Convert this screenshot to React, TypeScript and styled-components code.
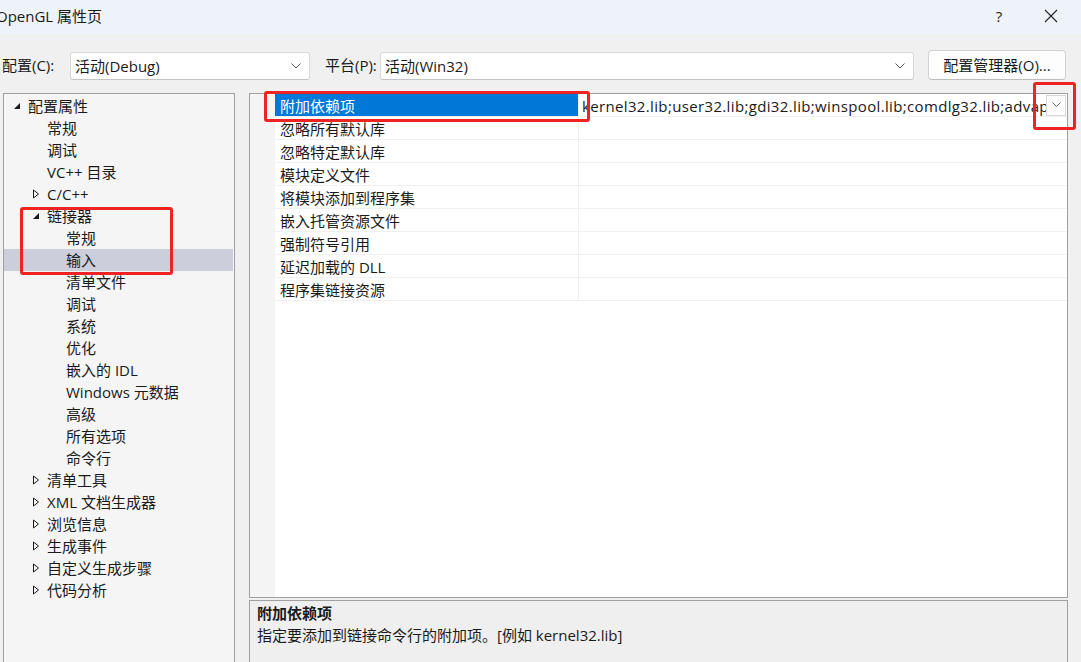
import React from "react";
import styled, { createGlobalStyle } from "styled-components";

const GlobalStyle = createGlobalStyle`
  html, body { margin: 0; padding: 0; background: #f0f0f0; }
  body { font-family: "Open Sans", "Noto Sans CJK SC", sans-serif; color: #1a1a1a; }
  * { box-sizing: border-box; }
`;

const Window = styled.div`
  position: relative;
  width: 1081px;
  height: 662px;
  overflow: hidden;
  display: flex;
  flex-direction: column;
  background: #f0f0f0;
  font-size: 15px;
`;

const TitleBar = styled.div`
  height: 34px;
  flex: none;
  display: flex;
  align-items: center;
  background: #eef2f9;
`;

const Title = styled.div`
  margin-left: -4px;
  margin-top: -4px;
  font-size: 15px;
  color: #1a1a1a;
  flex: 1;
`;

const TitleButton = styled.div<{ $w: number }>`
  width: ${(p) => p.$w}px;
  height: 30px;
  margin-top: -3px;
  display: flex;
  align-items: center;
  justify-content: center;
  font-size: 15px;
  color: #222;
`;

const Toolbar = styled.div`
  height: 59px;
  flex: none;
  display: flex;
  align-items: center;
  padding: 3px 15px 0 2px;
`;

const Label = styled.span<{ $w: number; $ml?: number }>`
  margin-left: ${(p) => p.$ml ?? 0}px;
  width: ${(p) => p.$w}px;
  line-height: 20px;
  white-space: nowrap;
`;

const Combo = styled.div<{ $w: number }>`
  width: ${(p) => p.$w}px;
  height: 28px;
  background: #fff;
  border: 1px solid #d8d8d8;
  border-bottom-color: #c4c4c4;
  border-radius: 3px;
  display: flex;
  align-items: center;
  padding: 0 8px 0 4px;
  margin-top: 1px;
`;

const ComboText = styled.span`
  flex: 1;
  line-height: 20px;
`;

const ManagerButton = styled.div`
  margin-left: auto;
  width: 138px;
  height: 30px;
  background: #fdfdfd;
  border: 1px solid #d3d3d3;
  border-bottom-color: #bdbdbd;
  border-radius: 4px;
  display: flex;
  align-items: center;
  justify-content: center;
  line-height: 20px;
  white-space: nowrap;
`;

const Main = styled.div`
  flex: 1;
  display: flex;
  padding-left: 3px;
  min-height: 0;
`;

const TreePanel = styled.div`
  width: 232px;
  flex: none;
  border: 1px solid #a0a0a0;
  border-bottom: none;
  background: #f5f5f5;
  padding-top: 1px;
`;

const TreeRow = styled.div<{ $level: number; $selected?: boolean }>`
  height: 22px;
  display: flex;
  align-items: center;
  padding-left: ${(p) => 9 + p.$level * 19}px;
  background: ${(p) => (p.$selected ? "#cccedb" : "transparent")};
  margin-right: 1px;
  line-height: 20px;
  white-space: nowrap;
`;

const Expander = styled.span`
  width: 15px;
  height: 20px;
  display: flex;
  align-items: center;
  flex: none;
`;

const RightColumn = styled.div`
  flex: none;
  width: 819px;
  margin-left: 14px;
  display: flex;
  flex-direction: column;
  gap: 2px;
`;

const GridPanel = styled.div`
  height: 505px;
  flex: none;
  border: 1px solid #a0a0a0;
  background: #fff;
  display: flex;
  overflow: hidden;
`;

const Gutter = styled.div`
  width: 25px;
  flex: none;
  background: #f4f4f4;
`;

const Grid = styled.div`
  flex: 1;
  min-width: 0;
  display: flex;
  flex-direction: column;
`;

const GridRow = styled.div`
  height: 23px;
  display: flex;
  border-bottom: 1px solid #f0f0f0;
`;

const NameCell = styled.div<{ $selected?: boolean }>`
  width: 304px;
  flex: none;
  padding: 1px 0 0 5px;
  display: flex;
  align-items: center;
  background: ${(p) => (p.$selected ? "#0078d7" : "transparent")};
  color: ${(p) => (p.$selected ? "#fff" : "#1a1a1a")};
  border-right: 1px solid #f0f0f0;
  line-height: 20px;
  white-space: nowrap;
`;

const ValueCell = styled.div`
  flex: 1;
  min-width: 0;
  display: flex;
  align-items: center;
  overflow: hidden;
  line-height: 20px;
`;

const ValueText = styled.span`
  white-space: nowrap;
  overflow: hidden;
  flex: 1;
  min-width: 0;
  margin-left: 3px;
  padding-top: 1px;
  letter-spacing: 0.35px;
`;

const DropButton = styled.div`
  width: 20px;
  height: 21px;
  flex: none;
  background: #fff;
  border: 1px solid #d6d6d6;
  display: flex;
  align-items: center;
  justify-content: center;
  margin-right: 1px;
`;

const DescPanel = styled.div`
  flex: 1;
  border: 1px solid #a0a0a0;
  border-bottom: none;
  background: #efefef;
  padding: 2px 7px;
`;

const DescTitle = styled.div`
  font-weight: 700;
  line-height: 20px;
`;

const DescText = styled.div`
  line-height: 20px;
  margin-top: 2px;
`;

const RedBox = styled.div<{ $x: number; $y: number; $w: number; $h: number }>`
  position: absolute;
  left: ${(p) => p.$x}px;
  top: ${(p) => p.$y}px;
  width: ${(p) => p.$w}px;
  height: ${(p) => p.$h}px;
  border: 3px solid #ee2424;
  border-radius: 3px;
  pointer-events: none;
`;

const Chevron = ({ size = 10 }: { size?: number }) => (
  <svg width={size} height={size / 2 + 1} viewBox="0 0 10 6">
    <path d="M0.5 0.5 L5 5 L9.5 0.5" fill="none" stroke="#555" strokeWidth="1" />
  </svg>
);

const Expanded = () => (
  <svg width="8" height="8" viewBox="0 0 8 8">
    <polygon points="7,1 7,7 1,7" fill="#1a1a1a" />
  </svg>
);

const Collapsed = () => (
  <svg width="8" height="10" viewBox="0 0 8 10">
    <polygon points="1.5,1 6.5,5 1.5,9" fill="none" stroke="#1a1a1a" strokeWidth="1" />
  </svg>
);

type Node = { label: string; level: number; exp?: "open" | "closed"; selected?: boolean };

const tree: Node[] = [
  { label: "配置属性", level: 0, exp: "open" },
  { label: "常规", level: 1 },
  { label: "调试", level: 1 },
  { label: "VC++ 目录", level: 1 },
  { label: "C/C++", level: 1, exp: "closed" },
  { label: "链接器", level: 1, exp: "open" },
  { label: "常规", level: 2 },
  { label: "输入", level: 2, selected: true },
  { label: "清单文件", level: 2 },
  { label: "调试", level: 2 },
  { label: "系统", level: 2 },
  { label: "优化", level: 2 },
  { label: "嵌入的 IDL", level: 2 },
  { label: "Windows 元数据", level: 2 },
  { label: "高级", level: 2 },
  { label: "所有选项", level: 2 },
  { label: "命令行", level: 2 },
  { label: "清单工具", level: 1, exp: "closed" },
  { label: "XML 文档生成器", level: 1, exp: "closed" },
  { label: "浏览信息", level: 1, exp: "closed" },
  { label: "生成事件", level: 1, exp: "closed" },
  { label: "自定义生成步骤", level: 1, exp: "closed" },
  { label: "代码分析", level: 1, exp: "closed" },
];

const props = [
  "附加依赖项",
  "忽略所有默认库",
  "忽略特定默认库",
  "模块定义文件",
  "将模块添加到程序集",
  "嵌入托管资源文件",
  "强制符号引用",
  "延迟加载的 DLL",
  "程序集链接资源",
];

export default function App() {
  return (
    <>
      <GlobalStyle />
      <Window>
        <TitleBar>
          <Title>OpenGL 属性页</Title>
          <TitleButton $w={46}>?</TitleButton>
          <TitleButton $w={58}>
            <svg width="14" height="14" viewBox="0 0 14 14">
              <path d="M1 1 L13 13 M13 1 L1 13" stroke="#222" strokeWidth="1.1" />
            </svg>
          </TitleButton>
          <TitleButton $w={1} />
        </TitleBar>
        <Toolbar>
          <Label $w={68}>配置(C):</Label>
          <Combo $w={240}>
            <ComboText>活动(Debug)</ComboText>
            <Chevron />
          </Combo>
          <Label $w={55} $ml={15}>平台(P):</Label>
          <Combo $w={534}>
            <ComboText>活动(Win32)</ComboText>
            <Chevron />
          </Combo>
          <ManagerButton>配置管理器(O)...</ManagerButton>
        </Toolbar>
        <Main>
          <TreePanel>
            {tree.map((n, i) => (
              <TreeRow key={i} $level={n.level} $selected={n.selected}>
                <Expander>
                  {n.exp === "open" ? <Expanded /> : n.exp === "closed" ? <Collapsed /> : null}
                </Expander>
                {n.label}
              </TreeRow>
            ))}
          </TreePanel>
          <RightColumn>
            <GridPanel>
              <Gutter />
              <Grid>
                {props.map((p, i) => (
                  <GridRow key={p}>
                    <NameCell $selected={i === 0}>{p}</NameCell>
                    <ValueCell>
                      {i === 0 && (
                        <>
                          <ValueText>kernel32.lib;user32.lib;gdi32.lib;winspool.lib;comdlg32.lib;advapi32.lib;shell32.lib;ole32.lib;oleaut32.lib</ValueText>
                          <DropButton>
                            <Chevron size={9} />
                          </DropButton>
                        </>
                      )}
                    </ValueCell>
                  </GridRow>
                ))}
              </Grid>
            </GridPanel>
            <DescPanel>
              <DescTitle>附加依赖项</DescTitle>
              <DescText>指定要添加到链接命令行的附加项。[例如 kernel32.lib]</DescText>
            </DescPanel>
          </RightColumn>
        </Main>
        <RedBox $x={264} $y={91} $w={326} $h={31} />
        <RedBox $x={20} $y={207} $w={153} $h={68} />
        <RedBox $x={1033} $y={82} $w={43} $h={48} />
      </Window>
    </>
  );
}
